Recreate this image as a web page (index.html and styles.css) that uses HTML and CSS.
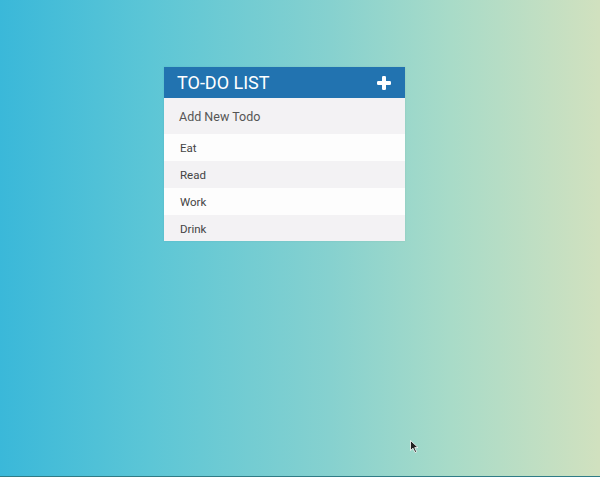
FILE: index.html
```html
<!DOCTYPE html>
<html>
<head>
<meta charset="utf-8">
<link rel="stylesheet" href="styles.css">
</head>
<body>
<div class="page">
  <div class="card">
    <div class="header">
      <span class="title">TO-DO LIST</span>
      <svg class="plus" width="14" height="14" viewBox="0 0 14 14"><rect x="5" y="0" width="4" height="14" rx="1.2" fill="#fff"/><rect x="0" y="5" width="14" height="4" rx="1.2" fill="#fff"/></svg>
    </div>
    <div class="add">Add New Todo</div>
    <ul class="list">
      <li class="item">Eat</li>
      <li class="item alt">Read</li>
      <li class="item">Work</li>
      <li class="item alt">Drink</li>
    </ul>
  </div>
  <svg class="cursor" width="10" height="14" viewBox="0 0 10 14"><path d="M0.5 0.5 L0.5 10.5 L3 8.2 L5 12.5 L6.6 11.8 L4.7 7.6 L8 7.6 Z" fill="#222" stroke="#fff" stroke-width="0.8"/></svg>
</div>
</body>
</html>
```
FILE: styles.css
```css
html, body {
  margin: 0;
  padding: 0;
}
body {
  font-family: Roboto, "Liberation Sans", sans-serif;
}
.page {
  position: relative;
  width: 600px;
  border-bottom: 1px solid #2f7c86;
  background: linear-gradient(to right, #3ab8d9 0%, #5cc6d6 25%, #86d1cf 55%, #a8dbc8 75%, #d1e1bf 100%);
  padding-top: 67px;
  box-sizing: content-box;
  height: 409px;
}
.card {
  width: 241px;
  margin-left: 164px;
  box-shadow: 0 0 2px rgba(0,0,0,0.08);
}
.header {
  height: 31px;
  background: #2273b0;
  display: flex;
  align-items: center;
  justify-content: space-between;
  padding: 0 14px 0 13px;
}
.title {
  color: #fff;
  font-size: 18px;
  line-height: 31px;
}
.plus {
  display: block;
}
.add {
  height: 35px;
  padding-top: 1px;
  line-height: 36px;
  background: #f3f2f4;
  color: #555;
  font-size: 12.5px;
  padding-left: 15px;
}
.list {
  list-style: none;
  margin: 0;
  padding: 0;
}
.item {
  height: 26px;
  padding-top: 1px;
  line-height: 27px;
  background: #fdfdfd;
  color: #444;
  font-size: 11.5px;
  padding-left: 16px;
}
.item.alt {
  background: #f3f2f4;
}
.list .item:last-child {
  height: 25px;
}
.cursor {
  position: absolute;
  left: 410px;
  top: 440px;
}
```
